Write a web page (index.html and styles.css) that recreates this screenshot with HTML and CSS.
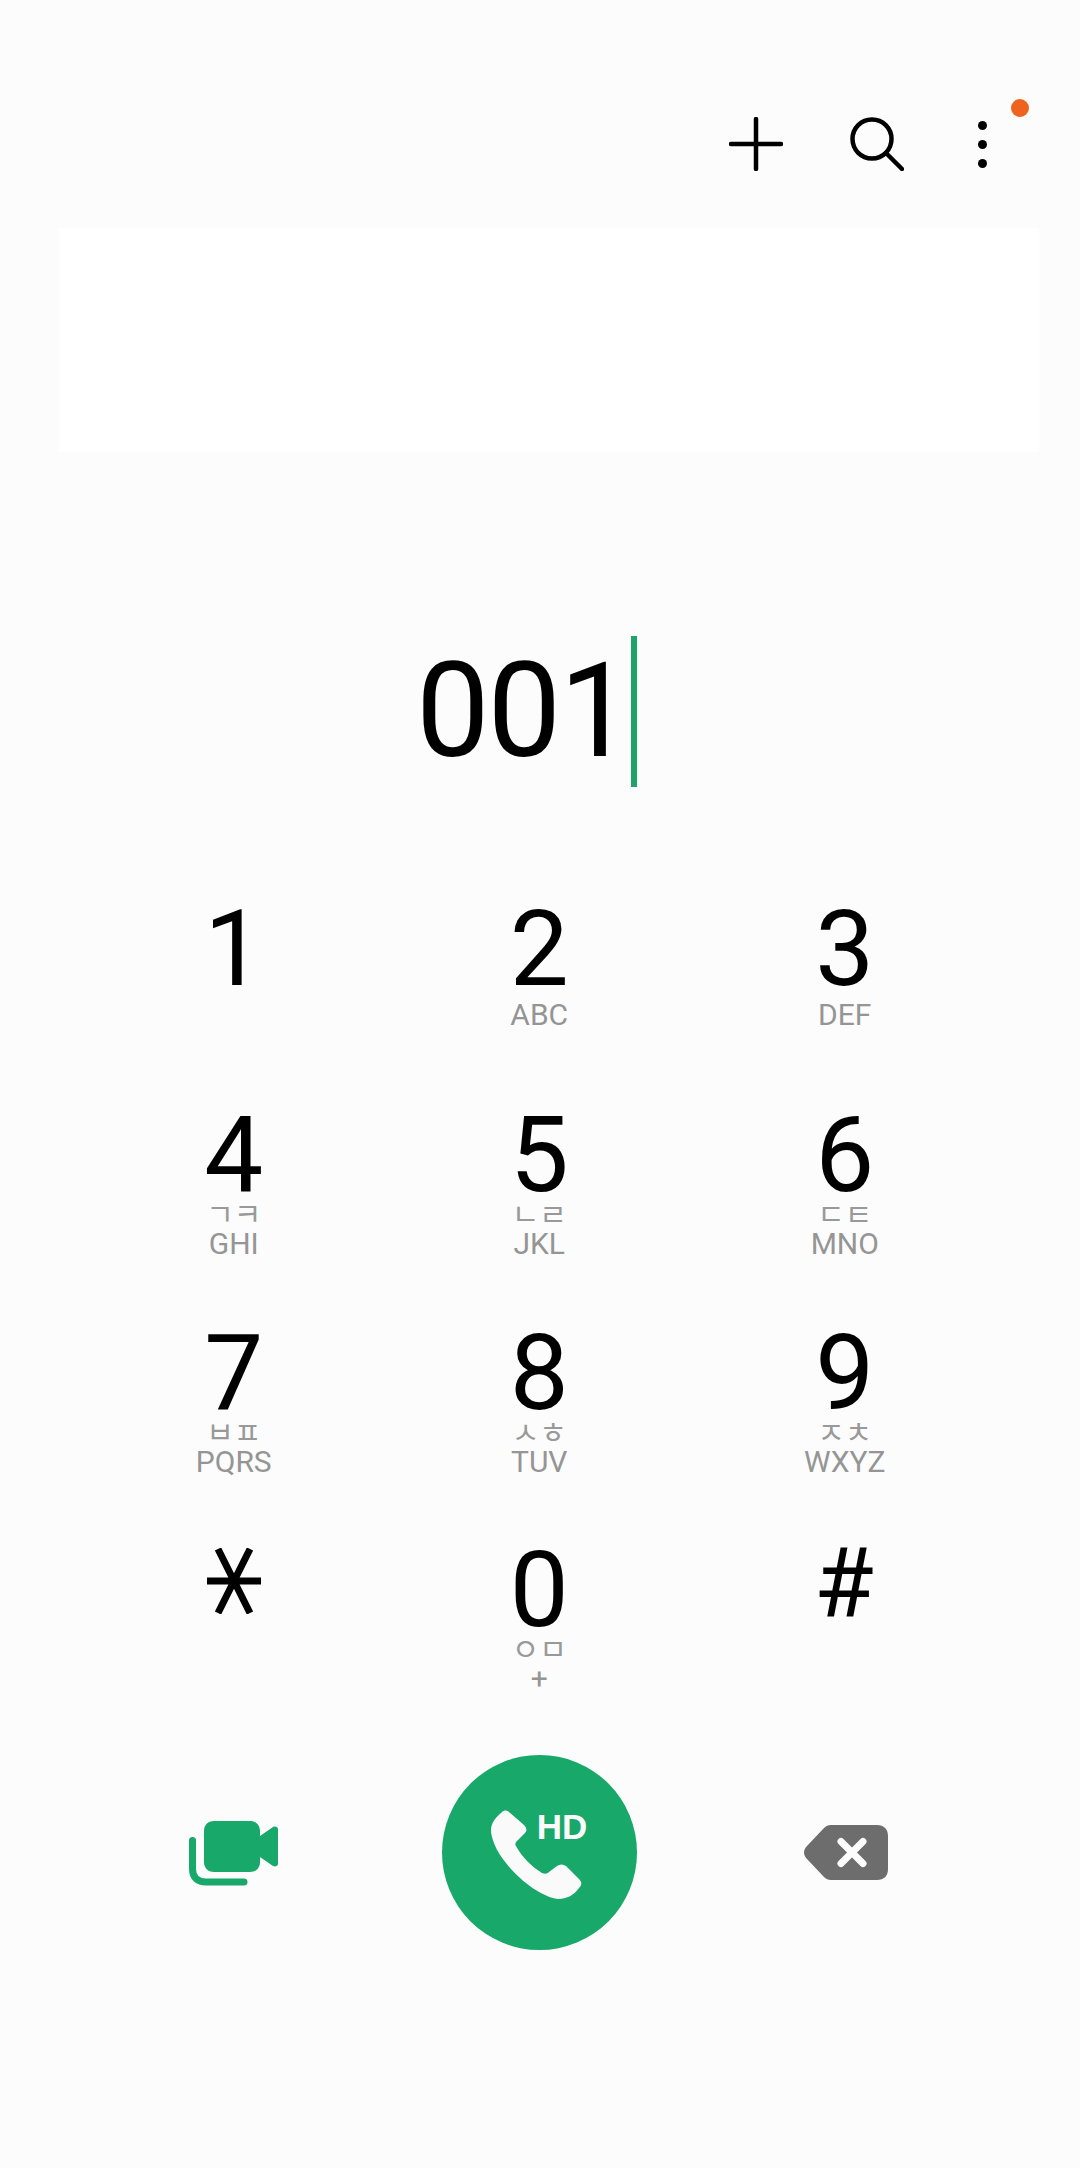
FILE: index.html
```html
<!DOCTYPE html>
<html lang="ko">
<head>
    <meta charset="UTF-8">
    <meta name="viewport" content="width=device-width, initial-scale=1.0">
    <title>Phone</title>
    <link rel="stylesheet" href="styles.css">
</head>
<body>
    <header class="topbar">
        <button class="icon_btn icon_add">
            <svg width="54" height="54" viewBox="0 0 54 54"><path d="M27 2V52M2 27H52" class="stroke_icon"/></svg>
        </button>
        <button class="icon_btn icon_search">
            <svg width="54" height="54" viewBox="0 0 54 54"><circle cx="22" cy="22" r="19.5" class="stroke_icon"/><path d="M36 36L52 52" class="stroke_icon"/></svg>
        </button>
        <button class="icon_btn icon_more">
            <span class="dot"></span><span class="dot"></span><span class="dot"></span>
            <span class="badge"></span>
        </button>
    </header>

    <div class="card"></div>

    <div class="number_row">
        <span class="number">001</span><span class="caret"></span>
    </div>

    <div class="keypad">
        <div class="key"><div class="digit">1</div></div>
        <div class="key"><div class="digit">2</div><div class="letters">ABC</div></div>
        <div class="key"><div class="digit">3</div><div class="letters">DEF</div></div>

        <div class="key"><div class="digit">4</div><div class="hangul">ㄱㅋ</div><div class="letters">GHI</div></div>
        <div class="key"><div class="digit">5</div><div class="hangul">ㄴㄹ</div><div class="letters">JKL</div></div>
        <div class="key"><div class="digit">6</div><div class="hangul">ㄷㅌ</div><div class="letters">MNO</div></div>

        <div class="key"><div class="digit">7</div><div class="hangul">ㅂㅍ</div><div class="letters">PQRS</div></div>
        <div class="key"><div class="digit">8</div><div class="hangul">ㅅㅎ</div><div class="letters">TUV</div></div>
        <div class="key"><div class="digit">9</div><div class="hangul">ㅈㅊ</div><div class="letters">WXYZ</div></div>

        <div class="key">
            <div class="digit digit_symbol">
                <svg width="54" height="66" viewBox="0 0 54 66"><path d="M0 33H54M11 1L43 65M43 1L11 65" class="star_line"/></svg>
            </div>
        </div>
        <div class="key"><div class="digit">0</div><div class="hangul">ㅇㅁ</div><div class="letters">+</div></div>
        <div class="key"><div class="digit digit_symbol digit_hash">#</div></div>
    </div>

    <div class="actions">
        <button class="action_cell">
            <svg width="92" height="74" viewBox="0 0 92 74">
                <path d="M26 5H62C68 5 72 9 72 15V20L85 11C87 10 90 11 90 13V48C90 50 87 51 85 50L72 41V46C72 52 68 56 62 56H26C20 56 16 52 16 46V15C16 9 20 5 26 5Z" class="video_fill"/>
                <path d="M4.500 24.500V53C4.500 62 10 66 18 66H56" class="video_line"/>
            </svg>
        </button>
        <button class="call_btn">
            <svg class="phone_icon" width="140" height="130" viewBox="0 0 140 130">
                <path d="M32 22C34 20 37 20 39 22L54 35C57 38 57 41 55 43L47 51C45 53 45 55 46 56C52 67 61 76 72 83C75 84 77 84 79 82L87 76C90 74 93 74 96 76L109 89C112 92 112 95 109 98C104 105 97 109 88 109C72 107 50 91 36 73C26 61 21 48 21 40C21 33 26 27 32 22Z" class="phone_fill"/>
            </svg>
            <span class="hd">HD</span>
        </button>
        <button class="action_cell action_back">
            <svg width="84" height="55" viewBox="0 0 84 55">
                <path d="M27 0H73C80 0 84 4 84 11V44C84 51 80 55 73 55H27C24 55 22 54 20 52L3 34C-1 30 -1 25 3 21L20 3C22 1 24 0 27 0Z" class="back_fill"/>
                <path d="M37 16.500L59 38.500M59 16.500L37 38.500" class="back_x"/>
            </svg>
        </button>
    </div>
</body>
</html>
```

FILE: styles.css
```css
* {
    box-sizing: border-box;
}

html,
body {
    margin: 0;
    padding: 0;
    width: 1080px;
    height: 2168px;
    overflow: hidden;
    background-color: #fcfcfc;
    font-family: Roboto, sans-serif;
    color: #000;
}

button {
    padding: 0;
    border: 0;
    background: none;
}

.topbar {
    display: flex;
    justify-content: flex-end;
    align-items: center;
    height: 228px;
    padding: 60px 93px 0 0;
}

.icon_btn {
    position: relative;
    display: flex;
    flex-direction: column;
    align-items: center;
    justify-content: center;
    width: 54px;
    height: 54px;
}

.icon_search {
    margin-left: 67px;
}

.icon_more {
    gap: 10px;
    width: 9px;
    margin-left: 74px;
}

.stroke_icon {
    fill: none;
    stroke: #000;
    stroke-width: 4.5;
    stroke-linecap: round;
}

.dot {
    flex: none;
    width: 9px;
    height: 9px;
    border-radius: 50%;
    background-color: #000;
}

.badge {
    position: absolute;
    top: -18px;
    left: 33px;
    width: 18px;
    height: 18px;
    border-radius: 50%;
    background-color: #ee641e;
}

.card {
    height: 224px;
    margin: 0 41px 0 59px;
    background-color: #fff;
}

.number_row {
    display: flex;
    justify-content: flex-start;
    align-items: flex-start;
    height: 450px;
    padding: 184px 0 0 416px;
}

.number {
    font-size: 131px;
    line-height: 151px;
    letter-spacing: -2px;
}

.caret {
    width: 6px;
    height: 151px;
    background-color: #1fa36b;
}

.keypad {
    display: grid;
    grid-template-columns: repeat(3, 305.5px);
    grid-template-rows: 206px 218px 217px 212px;
    padding-left: 81px;
}

.key {
    display: flex;
    flex-direction: column;
    align-items: center;
}

.digit {
    display: flex;
    align-items: center;
    justify-content: center;
    height: 96px;
    font-size: 105px;
    line-height: 96px;
}

.digit_symbol {
    height: 76px;
    line-height: 76px;
}

.digit_hash {
    margin: 2px 0 0 -2px;
    font-size: 97px;
}

.hangul {
    height: 26px;
    margin-top: -5px;
    margin-bottom: 2px;
    font-family: "Noto Sans CJK KR", sans-serif;
    font-size: 30px;
    font-weight: 400;
    line-height: 26px;
    color: #999;
}

.letters {
    height: 34px;
    font-size: 30px;
    line-height: 34px;
    color: #959595;
}

.star_line {
    fill: none;
    stroke: #000;
    stroke-width: 7;
}

.actions {
    display: grid;
    grid-template-columns: repeat(3, 305.5px);
    align-items: center;
    justify-items: center;
    padding-left: 81px;
}

.action_cell {
    display: flex;
    align-items: center;
    justify-content: center;
}

.action_back {
    margin-left: 2px;
}

.call_btn {
    position: relative;
    width: 195px;
    height: 195px;
    border-radius: 50%;
    background-color: #17a86a;
}

.phone_icon {
    position: absolute;
    top: 35px;
    left: 28px;
}

.video_fill {
    fill: #17a86a;
}

.video_line {
    fill: none;
    stroke: #17a86a;
    stroke-width: 7;
    stroke-linecap: round;
}

.phone_fill {
    fill: #fafafa;
}

.hd {
    position: absolute;
    top: 52px;
    left: 95px;
    font-size: 35px;
    font-weight: 700;
    color: #fafafa;
}

.back_fill {
    fill: #6d6d6d;
}

.back_x {
    fill: none;
    stroke: #fcfcfc;
    stroke-width: 7;
    stroke-linecap: round;
}
```
